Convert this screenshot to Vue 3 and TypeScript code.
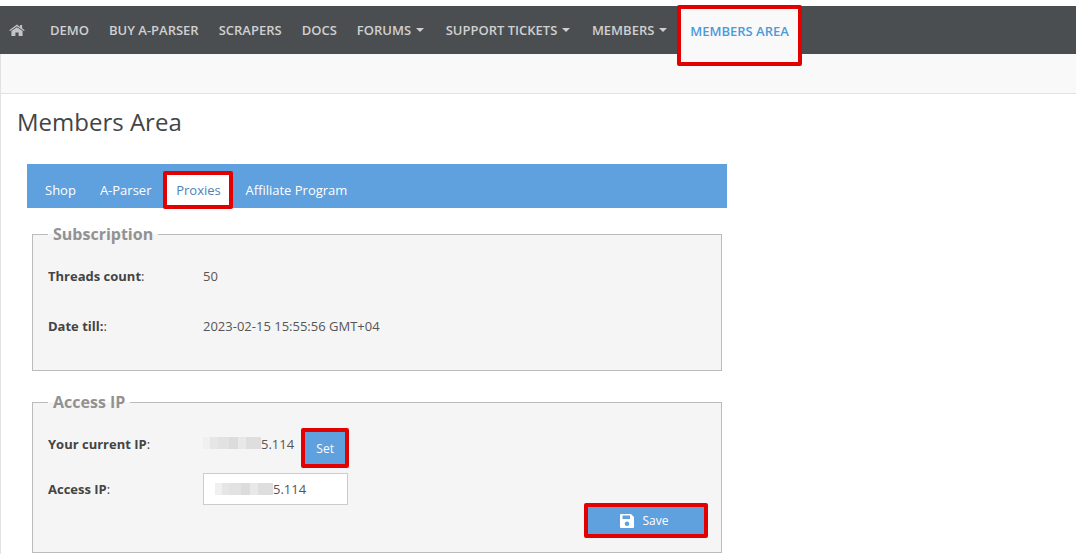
<script setup lang="ts">
const navItems: { label: string; caret?: boolean }[] = [
  { label: 'DEMO' },
  { label: 'BUY A-PARSER' },
  { label: 'SCRAPERS' },
  { label: 'DOCS' },
  { label: 'FORUMS', caret: true },
  { label: 'SUPPORT TICKETS', caret: true },
  { label: 'MEMBERS', caret: true },
]
</script>

<template>
  <div class="page">
    <nav class="nav">
      <svg class="home" viewBox="0 0 16 14" width="16" height="12" preserveAspectRatio="none" aria-hidden="true">
        <path fill="#c4c4c4" d="M8 0.6 0.2 7.2l.9 1.1L8 2.6l6.9 5.7.9-1.1-2.7-2.3V1.2h-2v2.3L8 .6zM8 3.7 2.4 8.3V14h4V10h3.2v4h4V8.300z" />
      </svg>
      <a v-for="item in navItems" :key="item.label" class="nav-link">
        {{ item.label }}<i v-if="item.caret" class="caret"></i>
      </a>
      <a class="nav-active">MEMBERS AREA</a>
    </nav>
    <div class="subbar"></div>
    <main class="content">
      <h1 class="title">Members Area</h1>
      <div class="panel">
        <div class="tabs">
          <a class="tab">Shop</a>
          <a class="tab">A-Parser</a>
          <a class="tab tab-active">Proxies</a>
          <a class="tab">Affiliate Program</a>
        </div>
        <fieldset class="box box-sub">
          <legend>Subscription</legend>
          <div class="row row-threads"><span class="label"><b>Threads count</b>:</span><span class="val">50</span></div>
          <div class="row row-date"><span class="label"><b>Date till:</b>:</span><span class="val">2023-02-15 15:55:56 GMT+04</span></div>
        </fieldset>
        <fieldset class="box box-ip">
          <legend>Access IP</legend>
          <div class="row row-current">
            <span class="label"><b>Your current IP</b>:</span>
            <span class="blur"></span><span class="val ip">5.114</span>
            <button class="set">Set</button>
          </div>
          <div class="row row-access">
            <span class="label"><b>Access IP</b>:</span>
            <div class="input"><span class="blur"></span><span class="val">5.114</span></div>
          </div>
          <div class="actions">
            <button class="save">
              <svg viewBox="0 0 16 16" width="16" height="16" aria-hidden="true">
                <path fill="#fff" fill-rule="evenodd" d="M2 1h10l3 3v10a1 1 0 0 1-1 1H2a1 1 0 0 1-1-1V2a1 1 0 0 1 1-1zm1.500 1.500v3.500h7.500V2.500H3.500zM8 8.500a2.300 2.300 0 1 0 0 4.600 2.300 2.300 0 0 0 0-4.600z" />
              </svg>
              <span>Save</span>
            </button>
          </div>
        </fieldset>
      </div>
    </main>
  </div>
</template>

<style>
html, body { margin: 0; background: #fff; overflow: hidden; }
</style>

<style scoped>
.page {
  width: 1076px;
  height: 554px;
  overflow: hidden;
  padding-top: 6px;
  box-sizing: border-box;
  font-family: "Open Sans", sans-serif;
  font-size: 13px;
  color: #444;
}
.nav {
  height: 48px;
  background: #4b4e51;
  display: flex;
  align-items: center;
  position: relative;
  padding-left: 9px;
}
.home { margin-right: 15px; }
.nav-link {
  color: #d0d0d0;
  font-size: 13px;
  font-weight: 600;
  padding: 0 10px;
  display: flex;
  align-items: center;
  white-space: nowrap;
}
.caret {
  width: 0;
  height: 0;
  border: 4px solid transparent;
  border-top-color: #d0d0d0;
  border-bottom: 0;
  margin: 0 1.6px 0 5px;
}
.nav-active {
  align-self: flex-start;
  box-sizing: border-box;
  width: 125px;
  height: 61px;
  margin: -1px 0 0 -2px;
  border: 4px solid #e30000;
  border-radius: 2px;
  background: #f9f9f9;
  color: #4a9bdc;
  font-size: 13px;
  font-weight: 600;
  text-align: center;
  line-height: 44px;
  position: relative;
  z-index: 1;
  white-space: nowrap;
}
.subbar {
  height: 39px;
  background: #f9f9f9;
  border-bottom: 1px solid #e2e2e2;
  border-left: 1px solid #e2e2e2;
}
.content { border-left: 1px solid #e2e2e2; height: 460px; padding-left: 16px; }
.title {
  margin: 0;
  padding-top: 13px;
  font-size: 24px;
  font-weight: 400;
  line-height: 30px;
  color: #444;
}
.panel { width: 700px; margin: 27px 0 0 10px; }
.tabs {
  height: 44px;
  box-sizing: border-box;
  padding: 8px 0 0 8px;
  background: #5fa0de;
  display: flex;
  align-items: center;
  font-size: 13px;
}
.tab { color: #fff; padding: 0 10px; margin-right: 2px; }
.tab:first-child { margin-right: 4px; }
.tab-active {
  box-sizing: border-box;
  flex: none;
  width: 70px;
  height: 38px;
  line-height: 30px;
  padding: 0;
  text-align: center;
  margin-right: 2px;
  background: #fff;
  color: #4f81b5;
  border: 4px solid #e30000;
  border-radius: 2px;
}
.box {
  margin: 17px 5px 0;
  min-width: 0;
  padding: 0 15px;
  background: #f5f5f5;
  border: 1px solid #bbb;
  box-sizing: border-box;
  position: relative;
}
.box legend {
  font-size: 16px;
  font-weight: 700;
  color: #929292;
  padding: 0 5px;
  margin-left: 0;
  line-height: 22px;
}
.box-sub { height: 148px; margin-top: 15px; }
.box-ip { height: 162px; margin-top: 20px; }
.row { display: flex; align-items: center; font-size: 13px; }
.label { width: 155px; flex: none; line-height: 18px; }
.label b { font-weight: 700; }
.val { color: #555; line-height: 18px; }
.row-threads { margin-top: 22px; }
.row-date { margin-top: 32px; }
.row-current { margin-top: 15px; height: 40px; align-items: flex-start; }
.row-current .label, .row-current .ip { margin-top: 7px; }
.row-current .blur { margin-top: 9px; }
.row-access { margin-top: 5px; height: 32px; }
.blur {
  display: inline-block;
  flex: none;
  width: 58px;
  height: 12px;
  background: linear-gradient(90deg, #f0f0f0 0 12%, #e6e6e6 12% 25%, #e2e2e2 25% 45%, #dcdcdc 45% 60%, #e8e8e8 60% 75%, #dedede 75% 100%);
}
.set {
  box-sizing: border-box;
  width: 48px;
  height: 40px;
  margin-left: 7px;
  background: #5fa0de;
  border: 4px solid #e30000;
  border-radius: 2px;
  color: #fff;
  font-family: inherit;
  font-size: 12px;
  padding: 0;
}
.input {
  box-sizing: border-box;
  width: 145px;
  height: 32px;
  background: #fff;
  border: 1px solid #ccc;
  display: flex;
  align-items: center;
  padding-left: 11px;
}
.actions { position: absolute; right: 13px; top: 90px; }
.save {
  box-sizing: border-box;
  width: 124px;
  height: 35px;
  background: #5fa0de;
  border: 4px solid #e30000;
  border-radius: 2px;
  color: #fff;
  font-family: inherit;
  font-size: 12px;
  display: flex;
  align-items: center;
  justify-content: center;
  gap: 8px;
  padding: 0 5px 0 0;
}
</style>
